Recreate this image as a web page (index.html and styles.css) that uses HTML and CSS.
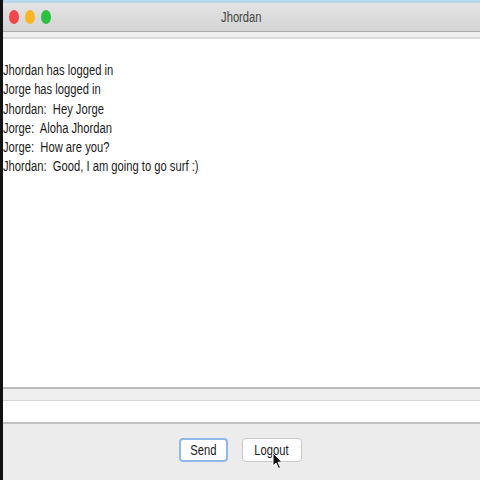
FILE: index.html
```html
<!DOCTYPE html>
<html>
<head>
<meta charset="utf-8">
<link rel="stylesheet" href="styles.css">
</head>
<body>
<div class="screen">
  <div class="edge"></div>
  <div class="window">
    <div class="topline"></div>
    <div class="titlebar">
      <div class="lights">
        <span class="light red"></span>
        <span class="light yellow"></span>
        <span class="light green"></span>
      </div>
      <div class="title"><span class="narrow">Jhordan</span></div>
    </div>
    <div class="strip"></div>
    <div class="log">
      <div class="lines">
        <div class="line">Jhordan has logged in</div>
        <div class="line">Jorge has logged in</div>
        <div class="line">Jhordan:&nbsp; Hey Jorge</div>
        <div class="line">Jorge:&nbsp; Aloha Jhordan</div>
        <div class="line">Jorge:&nbsp; How are you?</div>
        <div class="line">Jhordan:&nbsp; Good, I am going to go surf :)</div>
      </div>
    </div>
    <div class="sep"></div>
    <div class="input"></div>
    <div class="bottom">
      <button class="btn send"><span class="narrow">Send</span></button>
      <button class="btn logout"><span class="narrow">Logout</span></button>
    </div>
  </div>
  <svg class="cursor" width="12" height="18" viewBox="0 0 12 18">
    <path d="M1 1 L1 14 L4 11 L6.5 16.5 L8.5 15.6 L6 10.2 L10 10.2 Z" fill="#111" stroke="#fff" stroke-width="1"/>
  </svg>
</div>
</body>
</html>
```
FILE: styles.css
```css
html, body {
  margin: 0;
  padding: 0;
}
body {
  width: 480px;
  height: 480px;
  overflow: hidden;
  font-family: "Liberation Sans", Arial, sans-serif;
}
.screen {
  position: relative;
  display: flex;
  width: 480px;
  height: 480px;
}
.edge {
  width: 3px;
  background: #111;
  flex: none;
}
.window {
  flex: 1;
  display: flex;
  flex-direction: column;
  background: #ececec;
}
.topline {
  height: 3px;
  background: #b6d8ea;
}
.titlebar {
  height: 28px;
  background: linear-gradient(#e3e3e3, #d4d4d4);
  border-bottom: 1px solid #a9a9a9;
  display: flex;
  align-items: center;
  position: relative;
}
.lights {
  display: flex;
  gap: 6px;
  padding-left: 6px;
  position: relative;
  z-index: 1;
}
.light {
  width: 10px;
  height: 14px;
  flex: none;
  border-radius: 50%;
  display: block;
}
.red { background: #f0474a; }
.yellow { background: #f9b625; }
.green { background: #2ac140; }
.narrow {
  display: inline-block;
  transform: scaleX(0.8);
}
.title {
  position: absolute;
  left: 0;
  right: 0;
  text-align: center;
  font-size: 14px;
  color: #444;
}
.strip {
  height: 5px;
  background: #efefef;
  border-bottom: 2px solid #dadada;
}
.log {
  background: #fff;
  height: 326px;
  padding-top: 22px;
  border-bottom: 2px solid #bcbcbc;
  font-size: 14px;
  color: #1a1a1a;
}
.lines {
  transform: scaleX(0.8);
  transform-origin: left top;
}
.line {
  height: 19.3px;
  line-height: 19.3px;
  white-space: nowrap;
}
.sep {
  height: 11px;
  background: #efefef;
  border-bottom: 1px solid #d6d6d6;
}
.input {
  height: 21px;
  background: #fff;
  border-bottom: 2px solid #c2c2c2;
}
.bottom {
  flex: 1;
  display: flex;
  justify-content: center;
  align-items: flex-start;
  gap: 14px;
  padding-top: 14px;
  padding-right: 3px;
}
.btn {
  height: 24px;
  background: #fff;
  border: 1px solid #c8c8c8;
  border-radius: 4px;
  font-family: "Liberation Sans", Arial, sans-serif;
  font-size: 14px;
  color: #1a1a1a;
  padding: 0;
}
.send {
  width: 49px;
  border: 2px solid #8fb8e8;
}
.logout {
  width: 60px;
}
.cursor {
  position: absolute;
  left: 272px;
  top: 452px;
}
```
